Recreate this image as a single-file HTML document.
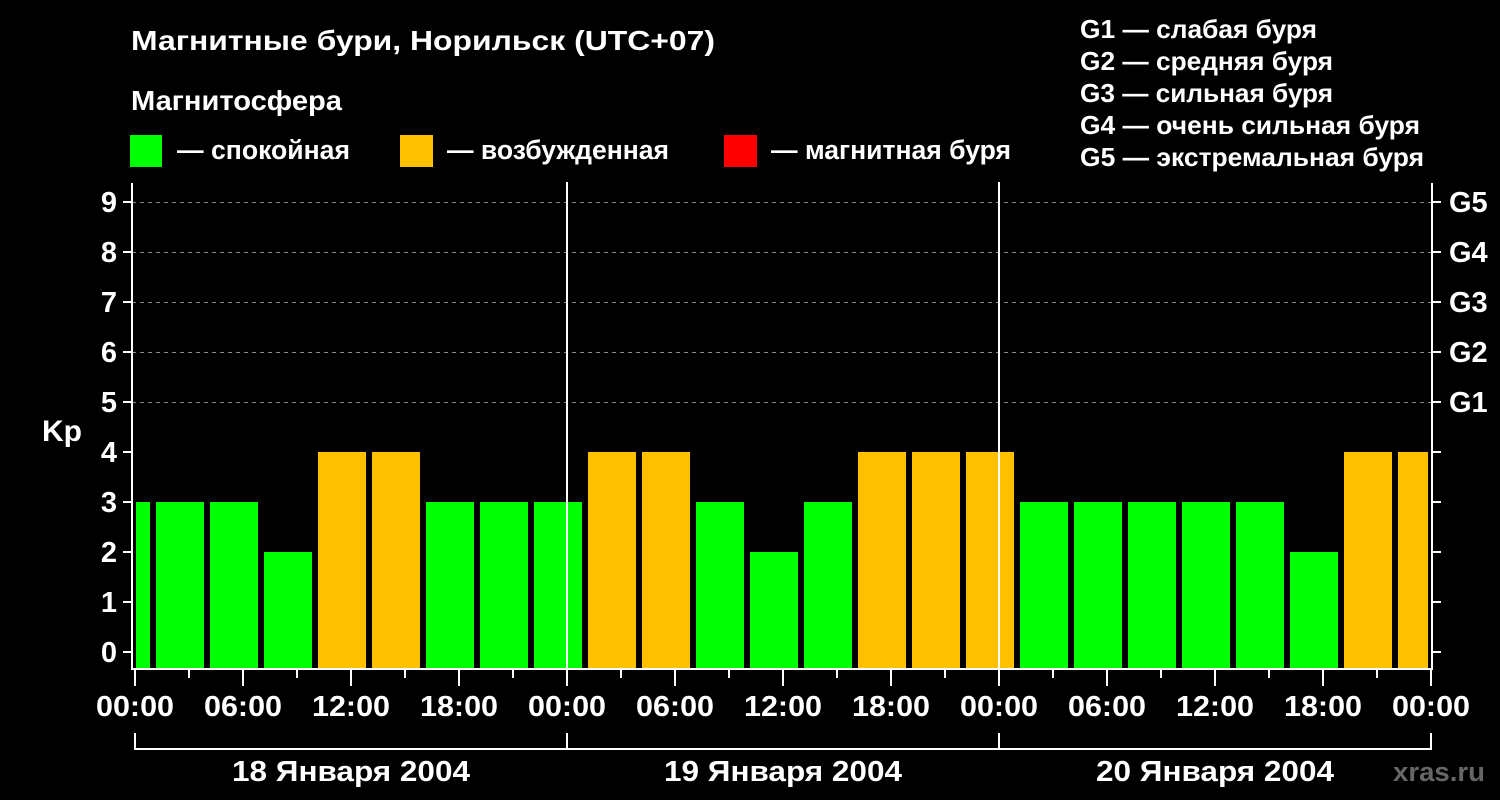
<!DOCTYPE html>
<html><head><meta charset="utf-8"><style>
html,body{margin:0;padding:0;background:#000;width:1500px;height:800px;overflow:hidden}
svg{display:block}
text{font-family:"Liberation Sans",sans-serif;font-weight:bold;fill:#fff}
</style></head><body>
<svg width="1500" height="800" viewBox="0 0 1500 800">
<text x="131" y="50" font-size="28" textLength="584" lengthAdjust="spacingAndGlyphs">Магнитные бури, Норильск (UTC+07)</text>
<text x="131" y="110" font-size="28" textLength="211" lengthAdjust="spacingAndGlyphs">Магнитосфера</text>
<rect x="130" y="135" width="32" height="32" fill="#00ff00"/>
<text x="177" y="159" font-size="27" textLength="173" lengthAdjust="spacingAndGlyphs">— спокойная</text>
<rect x="400" y="135" width="33" height="32" fill="#ffc000"/>
<text x="447" y="159" font-size="27" textLength="222" lengthAdjust="spacingAndGlyphs">— возбужденная</text>
<rect x="724" y="135" width="33" height="32" fill="#ff0000"/>
<text x="771" y="159" font-size="27" textLength="240" lengthAdjust="spacingAndGlyphs">— магнитная буря</text>
<g font-size="26">
<text x="1080" y="38" textLength="237" lengthAdjust="spacingAndGlyphs">G1 — слабая буря</text>
<text x="1080" y="70" textLength="253" lengthAdjust="spacingAndGlyphs">G2 — средняя буря</text>
<text x="1080" y="102" textLength="253" lengthAdjust="spacingAndGlyphs">G3 — сильная буря</text>
<text x="1080" y="134" textLength="340" lengthAdjust="spacingAndGlyphs">G4 — очень сильная буря</text>
<text x="1080" y="166" textLength="344" lengthAdjust="spacingAndGlyphs">G5 — экстремальная буря</text>
</g>
<g stroke="#888" stroke-width="1" stroke-dasharray="4,4">
<line x1="132" y1="202.5" x2="1432" y2="202.5"/>
<line x1="132" y1="252.5" x2="1432" y2="252.5"/>
<line x1="132" y1="302.5" x2="1432" y2="302.5"/>
<line x1="132" y1="352.5" x2="1432" y2="352.5"/>
<line x1="132" y1="402.5" x2="1432" y2="402.5"/>
</g>
<g>
<rect x="136" y="502" width="14" height="166" fill="#00ff00"/>
<rect x="156" y="502" width="48" height="166" fill="#00ff00"/>
<rect x="210" y="502" width="48" height="166" fill="#00ff00"/>
<rect x="264" y="552" width="48" height="116" fill="#00ff00"/>
<rect x="318" y="452" width="48" height="216" fill="#ffc000"/>
<rect x="372" y="452" width="48" height="216" fill="#ffc000"/>
<rect x="426" y="502" width="48" height="166" fill="#00ff00"/>
<rect x="480" y="502" width="48" height="166" fill="#00ff00"/>
<rect x="534" y="502" width="48" height="166" fill="#00ff00"/>
<rect x="588" y="452" width="48" height="216" fill="#ffc000"/>
<rect x="642" y="452" width="48" height="216" fill="#ffc000"/>
<rect x="696" y="502" width="48" height="166" fill="#00ff00"/>
<rect x="750" y="552" width="48" height="116" fill="#00ff00"/>
<rect x="804" y="502" width="48" height="166" fill="#00ff00"/>
<rect x="858" y="452" width="48" height="216" fill="#ffc000"/>
<rect x="912" y="452" width="48" height="216" fill="#ffc000"/>
<rect x="966" y="452" width="48" height="216" fill="#ffc000"/>
<rect x="1020" y="502" width="48" height="166" fill="#00ff00"/>
<rect x="1074" y="502" width="48" height="166" fill="#00ff00"/>
<rect x="1128" y="502" width="48" height="166" fill="#00ff00"/>
<rect x="1182" y="502" width="48" height="166" fill="#00ff00"/>
<rect x="1236" y="502" width="48" height="166" fill="#00ff00"/>
<rect x="1290" y="552" width="48" height="116" fill="#00ff00"/>
<rect x="1344" y="452" width="48" height="216" fill="#ffc000"/>
<rect x="1398" y="452" width="30" height="216" fill="#ffc000"/>
</g>
<g stroke="#fff" stroke-width="2" fill="none">
<polyline points="132,183 132,669 1432,669 1432,183"/>
<line x1="567" y1="182" x2="567" y2="669"/>
<line x1="999" y1="182" x2="999" y2="669"/>
<path d="M123 202H132M123 252H132M123 302H132M123 352H132M123 402H132M123 452H132M123 502H132M123 552H132M123 602H132M123 652H132"/>
<path d="M1432 202H1441M1432 252H1441M1432 302H1441M1432 352H1441M1432 402H1441M1432 452H1441M1432 502H1441M1432 552H1441M1432 602H1441M1432 652H1441"/>
<path d="M135 670V686M243 670V686M351 670V686M459 670V686M567 670V686M675 670V686M783 670V686M891 670V686M999 670V686M1107 670V686M1215 670V686M1323 670V686M1431 670V686"/>
<path d="M189 670V678M297 670V678M405 670V678M513 670V678M621 670V678M729 670V678M837 670V678M945 670V678M1053 670V678M1161 670V678M1269 670V678M1377 670V678"/>
<path d="M135 733V749H1431V733M567 733V749M999 733V749"/>
</g>
<g font-size="29" text-anchor="end">
<text x="117" y="212">9</text><text x="117" y="262">8</text><text x="117" y="312">7</text>
<text x="117" y="362">6</text><text x="117" y="412">5</text><text x="117" y="462">4</text>
<text x="117" y="512">3</text><text x="117" y="562">2</text><text x="117" y="612">1</text>
<text x="117" y="662">0</text>
</g>
<text x="42" y="441" font-size="30">Kp</text>
<g font-size="29">
<text x="1449" y="212">G5</text><text x="1449" y="262">G4</text><text x="1449" y="312">G3</text>
<text x="1449" y="362">G2</text><text x="1449" y="412">G1</text>
</g>
<g font-size="29" text-anchor="middle">
<text x="135" y="716" textLength="78" lengthAdjust="spacingAndGlyphs">00:00</text><text x="243" y="716" textLength="78" lengthAdjust="spacingAndGlyphs">06:00</text><text x="351" y="716" textLength="78" lengthAdjust="spacingAndGlyphs">12:00</text>
<text x="459" y="716" textLength="78" lengthAdjust="spacingAndGlyphs">18:00</text><text x="567" y="716" textLength="78" lengthAdjust="spacingAndGlyphs">00:00</text><text x="675" y="716" textLength="78" lengthAdjust="spacingAndGlyphs">06:00</text>
<text x="783" y="716" textLength="78" lengthAdjust="spacingAndGlyphs">12:00</text><text x="891" y="716" textLength="78" lengthAdjust="spacingAndGlyphs">18:00</text><text x="999" y="716" textLength="78" lengthAdjust="spacingAndGlyphs">00:00</text>
<text x="1107" y="716" textLength="78" lengthAdjust="spacingAndGlyphs">06:00</text><text x="1215" y="716" textLength="78" lengthAdjust="spacingAndGlyphs">12:00</text><text x="1323" y="716" textLength="78" lengthAdjust="spacingAndGlyphs">18:00</text>
<text x="1431" y="716" textLength="78" lengthAdjust="spacingAndGlyphs">00:00</text>
<text x="351" y="781" textLength="238" lengthAdjust="spacingAndGlyphs">18 Января 2004</text>
<text x="783" y="781" textLength="238" lengthAdjust="spacingAndGlyphs">19 Января 2004</text>
<text x="1215" y="781" textLength="238" lengthAdjust="spacingAndGlyphs">20 Января 2004</text>
</g>
<text x="1393" y="781" font-size="27" style="fill:#666" textLength="92" lengthAdjust="spacingAndGlyphs">xras.ru</text>
</svg>
</body></html>
